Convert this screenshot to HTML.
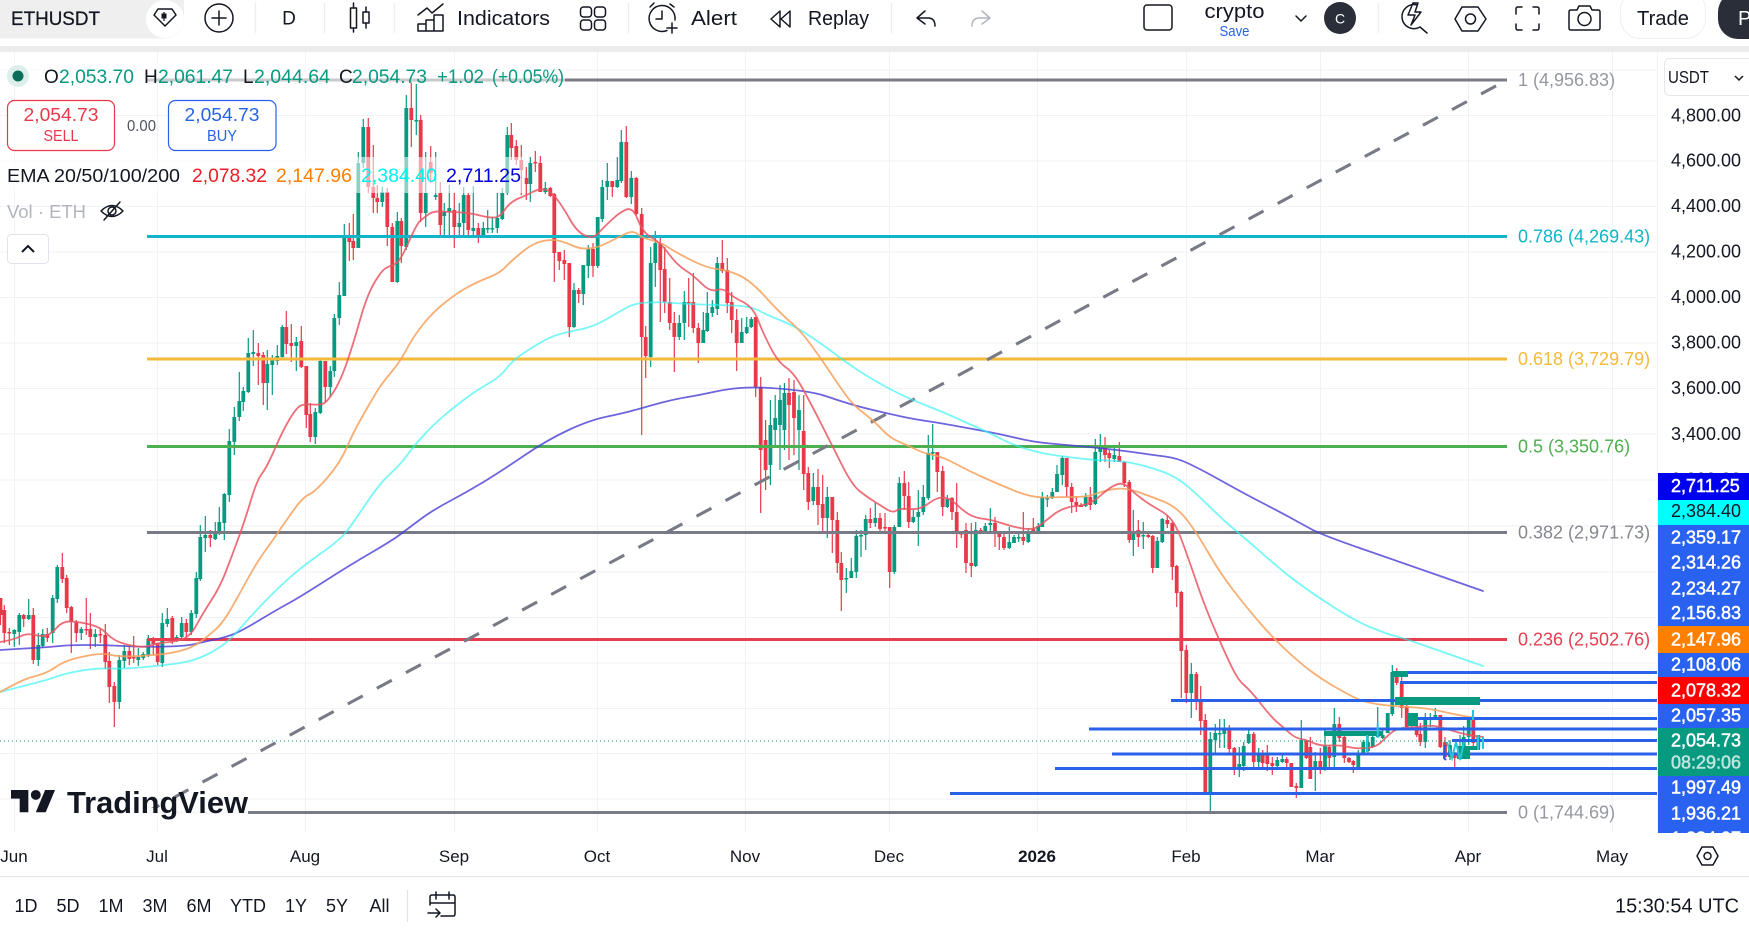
<!DOCTYPE html>
<html lang="en">
<head>
<meta charset="utf-8">
<title>ETHUSDT</title>
<style>
html,body{margin:0;padding:0;background:#fff;width:1749px;height:931px;overflow:hidden}
svg{display:block;font-family:"Liberation Sans",sans-serif;filter:blur(.3px)}
.i{fill:none;stroke:#131722;stroke-width:1.5;stroke-linecap:round;stroke-linejoin:round}
.t{fill:#131722}
.ax{font-size:18px;fill:#131722}
.tg{font-size:18px;fill:#fff;stroke:#fff;stroke-width:.5}
.xl{font-size:17px;fill:#131722;text-anchor:middle}
.rg{font-size:18px;fill:#131722;text-anchor:middle}
.fb{font-size:18px}
</style>
</head>
<body>
<svg xmlns="http://www.w3.org/2000/svg" width="1749" height="931" viewBox="0 0 1749 931">
<rect width="1749" height="931" fill="#fff"/>

<!-- grid -->
<g stroke="#f0f2f6" stroke-width="1">
<path d="M0 70H1657M0 115.5H1657M0 161H1657M0 206.500H1657M0 252H1657M0 297.500H1657M0 343H1657M0 388.500H1657M0 434H1657M0 480H1657M0 526H1657M0 572H1657M0 617.500H1657M0 663H1657M0 708.500H1657M0 753.500H1657M0 799H1657"/>
<path d="M14.500 52V833M157.500 52V833M305.500 52V833M454.500 52V833M597.500 52V833M745.500 52V833M889.500 52V833M1037.500 52V833M1186.500 52V833M1320.500 52V833M1468.500 52V833M1612.500 52V833M1657.500 52V833"/>
</g>

<!-- candles -->
<path id="gw" fill="none" stroke="#089981" stroke-width="1.2"/>
<path id="rw" fill="none" stroke="#e8394a" stroke-width="1.2"/>
<path id="gb" fill="none" stroke="#089981" stroke-width="3.8"/>
<path id="rb" fill="none" stroke="#e8394a" stroke-width="3.8"/>

<!-- fib lines -->
<g fill="none" stroke-width="3.1">
<path d="M147 80H1507" stroke="#787b86"/>
<path d="M147 236.500H1507" stroke="#11b4c9"/>
<path d="M147 359H1507" stroke="#f6b93b"/>
<path d="M147 446.500H1507" stroke="#4caf50"/>
<path d="M147 532.500H1507" stroke="#787b86"/>
<path d="M147 639.500H1507" stroke="#e53e4f"/>
<path d="M147 812.500H1507" stroke="#787b86"/>
<path d="M147 812L1507 80" stroke="#787b86" stroke-dasharray="17 16" stroke-dashoffset="3"/>
</g>
<g class="fb">
<text x="1518" y="86" fill="#9598a1">1 (4,956.83)</text>
<text x="1518" y="242.500" fill="#11b4c9">0.786 (4,269.43)</text>
<text x="1518" y="365" fill="#f6b93b">0.618 (3,729.79)</text>
<text x="1518" y="452.500" fill="#4caf50">0.5 (3,350.76)</text>
<text x="1518" y="538.500" fill="#85888f">0.382 (2,971.73)</text>
<text x="1518" y="645.500" fill="#e53e4f">0.236 (2,502.76)</text>
<text x="1518" y="818.500" fill="#9598a1">0 (1,744.69)</text>
</g>

<!-- EMA lines -->
<g id="ema" fill="none" stroke-width="1.8" stroke-linejoin="round" stroke-linecap="round">
<polyline stroke="#4a3fd6" stroke-opacity=".8" points="0,650 33,648 50,647 70,645 100,645 123,646 147,647 187,646 203,642 227,637 243,630 263,618 280,608 300,597 350,565 393,540 410,527 433,510 467,492 500,472 547,440 590,420 625,413 670,400 700,395 727,389 753,387 787,389 817,393 837,400 860,407 890,414 913,419 940,423 967,428 1000,434 1033,442 1067,445 1100,448 1133,452 1153,455 1177,458 1200,469 1220,480 1247,495 1280,512 1300,523 1322,535 1400,562 1483,591"/>
<polyline stroke="#2ff2f2" stroke-opacity=".65" points="0,692 27,685 47,680 67,673 97,668 123,669 157,666 190,662 213,652 230,640 250,617 273,593 300,568 340,540 353,523 380,483 400,465 413,447 433,425 453,408 477,390 500,377 513,360 533,347 550,337 567,332 593,327 617,313 635,303 660,302 687,304 717,305 750,306 767,315 797,327 830,350 847,363 873,380 907,398 943,412 967,423 990,433 1013,445 1040,453 1067,457 1093,460 1123,461 1150,467 1177,477 1200,497 1223,520 1247,540 1273,563 1300,585 1353,620 1387,634 1403,638 1437,650 1483,666"/>
<polyline stroke="#f7a05a" stroke-opacity=".85" points="0,692 17,683 28,678 47,673 63,662 80,657 103,653 120,657 157,655 177,652 193,647 207,637 223,623 240,593 257,562 273,540 283,525 303,497 315,492 340,463 353,433 370,403 382,383 400,362 413,337 433,312 457,293 477,282 500,273 510,262 533,243 553,239 567,243 580,249 597,248 617,238 633,230 642,238 660,242 677,253 707,268 727,270 750,280 780,313 800,330 820,357 840,387 853,405 873,420 890,438 907,445 923,453 943,457 967,470 1000,485 1033,498 1060,497 1087,497 1100,492 1123,487 1150,496 1177,507 1197,533 1220,573 1247,608 1273,638 1300,663 1320,678 1340,690 1363,702 1390,706 1427,708 1457,715 1483,719"/>
<polyline stroke="#ea5561" stroke-opacity=".85" points="0,642 13,640 27,633 43,637 52,633 63,621 80,622 100,627 110,637 120,643 143,648 157,643 173,642 190,637 203,613 220,587 233,553 245,520 257,480 267,467 283,430 297,407 305,404 320,405 327,402 340,382 353,345 367,295 382,270 390,266 400,262 417,223 425,217 433,211 453,212 470,213 490,218 500,217 510,202 527,195 538,189 550,190 563,207 577,232 593,239 603,228 620,212 633,207 643,233 660,242 677,265 693,275 710,292 723,288 733,297 753,307 763,333 778,362 793,372 807,396 833,447 852,485 867,497 883,507 893,513 900,508 920,510 937,497 950,498 970,517 993,520 1013,527 1033,530 1043,523 1063,507 1090,505 1110,487 1123,482 1133,492 1150,505 1167,514 1177,527 1190,563 1205,607 1225,653 1238,680 1250,690 1272,718 1283,727 1295,738 1307,740 1320,746 1340,745 1357,749 1377,747 1388,735 1398,728 1417,727 1433,725 1450,730 1467,735 1483,737"/>
</g>

<!-- price dotted -->
<path d="M0 741H1657" stroke="#089981" stroke-width="1" stroke-dasharray="1 3"/>

<!-- order lines -->
<g fill="none" stroke="#2962e8" stroke-width="3">
<path d="M1392 672.500H1657M1400 682.500H1657M1171 700.500H1657M1408 718.500H1657M1089 729H1657M1452 740.500H1657M1112 754H1657M1055 768.500H1657M950 793.500H1657"/>
</g>
<!-- position bars -->
<g fill="#089981">
<rect x="1392" y="671" width="16" height="6"/>
<rect x="1395" y="697" width="85" height="8"/>
<rect x="1324" y="731" width="59" height="5"/>
<rect x="1407" y="713" width="11" height="13"/>
<rect x="1457" y="746" width="13" height="13"/>
<rect x="1470" y="746" width="10" height="4"/>
</g>
<g fill="none" stroke="#26c6da" stroke-width="2">
<path d="M1377.700 723V738M1367 735V752M1473 710V720M1478 735V750M1483 737V749M1447 742L1452 758L1456 742L1460 760L1464 742"/>
</g>
<path d="M1445 745L1444 758L1446 760" fill="none" stroke="#3d50e0" stroke-width="2"/>

<!-- TradingView logo -->
<rect x="147" y="808" width="101" height="9" fill="#fff" fill-opacity=".95"/>
<g transform="translate(11 785) scale(1.24)" fill="#131722">
<path d="M14 22H7V11H0V4h14v18zM28 22h-8l7.500-18h8L28 22z"/><circle cx="20" cy="8" r="4"/>
</g>
<text x="67" y="813" font-size="30.500" font-weight="700" class="t" textLength="181" lengthAdjust="spacingAndGlyphs">TradingView</text>

<!-- legend backdrops -->
<rect x="0" y="63" width="565" height="20" fill="#fff" fill-opacity=".6"/>
<rect x="0" y="157" width="525" height="36" fill="#fff" fill-opacity=".55"/>

<!-- legend -->
<circle cx="18" cy="76" r="11" fill="#dcefeb"/><circle cx="18" cy="76" r="5.500" fill="#0b6e5c"/>
<g font-size="19" fill="#089981">
<text x="44" y="83" fill="#131722">O</text><text x="59" y="83" textLength="75" lengthAdjust="spacingAndGlyphs">2,053.70</text>
<text x="144" y="83" fill="#131722">H</text><text x="158" y="83" textLength="75" lengthAdjust="spacingAndGlyphs">2,061.47</text>
<text x="243" y="83" fill="#131722">L</text><text x="254" y="83" textLength="76" lengthAdjust="spacingAndGlyphs">2,044.64</text>
<text x="339" y="83" fill="#131722">C</text><text x="352" y="83" textLength="75" lengthAdjust="spacingAndGlyphs">2,054.73</text>
<text x="437" y="83" textLength="47" lengthAdjust="spacingAndGlyphs">+1.02</text>
<text x="492" y="83" textLength="72" lengthAdjust="spacingAndGlyphs">(+0.05%)</text>
</g>

<!-- sell/buy -->
<rect x="7.500" y="100.500" width="107" height="50" rx="7" fill="#fff" stroke="#e8394a" stroke-width="1.200"/>
<text x="61" y="121" text-anchor="middle" font-size="18" fill="#e8394a" textLength="75" lengthAdjust="spacingAndGlyphs">2,054.73</text>
<text x="61" y="141" text-anchor="middle" font-size="16" fill="#e8394a" textLength="35" lengthAdjust="spacingAndGlyphs">SELL</text>
<text x="127" y="131" font-size="15.500" fill="#50535e" textLength="29" lengthAdjust="spacingAndGlyphs">0.00</text>
<rect x="168.500" y="100.500" width="107.500" height="50" rx="7" fill="#fff" stroke="#2962e8" stroke-width="1.200"/>
<text x="222" y="121" text-anchor="middle" font-size="18" fill="#2962e8" textLength="75" lengthAdjust="spacingAndGlyphs">2,054.73</text>
<text x="222" y="141" text-anchor="middle" font-size="16" fill="#2962e8" textLength="30" lengthAdjust="spacingAndGlyphs">BUY</text>

<!-- EMA row -->
<text x="7" y="182" font-size="18.500" class="t" textLength="173" lengthAdjust="spacingAndGlyphs">EMA 20/50/100/200</text>
<g font-size="19">
<text x="192" y="182" fill="#ee1c25" textLength="75" lengthAdjust="spacingAndGlyphs">2,078.32</text>
<text x="276" y="182" fill="#ff7f00" textLength="76" lengthAdjust="spacingAndGlyphs">2,147.96</text>
<text x="361" y="182" fill="#00f0f0" textLength="76" lengthAdjust="spacingAndGlyphs">2,384.40</text>
<text x="446" y="182" fill="#0000e0" textLength="75" lengthAdjust="spacingAndGlyphs">2,711.25</text>
</g>

<!-- vol -->
<text x="7" y="218" font-size="18" fill="#b2b5be" textLength="79" lengthAdjust="spacingAndGlyphs">Vol · ETH</text>
<g class="i"><path d="M101 211Q112 200 123 211Q112 222 101 211Z"/><circle cx="112" cy="211" r="4"/><path d="M104 220L120 202"/></g>

<!-- collapse -->
<rect x="7.500" y="234.500" width="41" height="29" rx="4" fill="#fff" stroke="#e0e3eb"/>
<path d="M22 252L28 246L34 252" fill="none" stroke="#131722" stroke-width="2"/>

<!-- price axis -->
<rect x="1658" y="96" width="91" height="737" fill="#fff"/>
<g class="ax">
<text x="1671" y="121.500">4,800.00</text>
<text x="1671" y="166.500">4,600.00</text>
<text x="1671" y="212">4,400.00</text>
<text x="1671" y="257.500">4,200.00</text>
<text x="1671" y="303">4,000.00</text>
<text x="1671" y="348.500">3,800.00</text>
<text x="1671" y="394">3,600.00</text>
<text x="1671" y="440">3,400.00</text>
<text x="1671" y="485.500">3,200.00</text>
</g>
<rect x="1664.500" y="58.500" width="90" height="37" rx="5" fill="#fff" stroke="#e6e8ee"/>
<text x="1668" y="83" font-size="17.500" class="t" textLength="41" lengthAdjust="spacingAndGlyphs">USDT</text>
<path d="M1735 76L1739 80L1743 76" fill="none" stroke="#131722" stroke-width="1.500"/>

<!-- tags -->
<rect x="1658" y="473" width="91" height="27" fill="#0000f0"/>
<rect x="1658" y="500" width="91" height="25" fill="#00ffff"/>
<rect x="1658" y="525" width="91" height="101" fill="#2962f0"/>
<rect x="1658" y="626" width="91" height="27" fill="#ff7f00"/>
<rect x="1658" y="653" width="91" height="24" fill="#2962f0"/>
<rect x="1658" y="677" width="91" height="27" fill="#ff0000"/>
<rect x="1658" y="704" width="91" height="24" fill="#2962f0"/>
<rect x="1658" y="728" width="91" height="48" fill="#089981"/>
<rect x="1658" y="776" width="91" height="70" fill="#2962f0"/>
<g class="tg">
<text x="1671" y="492">2,711.25</text>
<text x="1671" y="517" style="fill:#131722;stroke:none">2,384.40</text>
<text x="1671" y="543.500">2,359.17</text>
<text x="1671" y="568.500">2,314.26</text>
<text x="1671" y="594.500">2,234.27</text>
<text x="1671" y="619">2,156.83</text>
<text x="1671" y="645.500">2,147.96</text>
<text x="1671" y="670.500">2,108.06</text>
<text x="1671" y="696.500">2,078.32</text>
<text x="1671" y="721.500">2,057.35</text>
<text x="1671" y="746.500">2,054.73</text>
<text x="1671" y="768.500" style="fill:#bfe6df;stroke:#bfe6df">08:29:06</text>
<text x="1671" y="793.500">1,997.49</text>
<text x="1671" y="819.500">1,936.21</text>
<text x="1671" y="844.500">1,834.97</text>
</g>
<rect x="0" y="833" width="1749" height="15" fill="#fff"/>

<!-- x axis -->
<g class="xl">
<text x="14" y="862">Jun</text><text x="157" y="862">Jul</text><text x="305" y="862">Aug</text><text x="454" y="862">Sep</text>
<text x="597" y="862">Oct</text><text x="745" y="862">Nov</text><text x="889" y="862">Dec</text><text x="1037" y="862" font-weight="700">2026</text>
<text x="1186" y="862">Feb</text><text x="1320" y="862">Mar</text><text x="1468" y="862">Apr</text><text x="1612" y="862">May</text>
</g>
<g class="i" stroke-width="1.400"><path d="M1697 856L1702 847H1713L1718 856L1713 865H1702Z"/><circle cx="1707.500" cy="856" r="3.500"/></g>
<path d="M0 876.500H1749" stroke="#e6e8ec" stroke-width="1.200"/>

<!-- bottom bar -->
<g class="rg">
<text x="26" y="912">1D</text><text x="68" y="912">5D</text><text x="111" y="912">1M</text><text x="155" y="912">3M</text><text x="199" y="912">6M</text>
<text x="248" y="912">YTD</text><text x="296" y="912">1Y</text><text x="337" y="912">5Y</text><text x="379.500" y="912">All</text>
</g>
<path d="M407.500 890V922" stroke="#e0e3eb" stroke-width="1.200"/>
<g class="i" stroke-width="1.400"><path d="M430 905V897Q430 895 432 895H453Q455 895 455 897V914Q455 916 453 916H441M436 892V899M449 892V899M430 903H455M428 913H440M436 909L440 913L436 917"/></g>
<text x="1739" y="912.500" text-anchor="end" font-size="20" class="t" textLength="124" lengthAdjust="spacingAndGlyphs">15:30:54 UTC</text>

<!-- top bar -->
<rect x="0" y="0" width="1749" height="46" fill="#fff"/>
<rect x="0" y="46" width="1749" height="6" fill="#ececec"/>
<rect x="-30" y="-20" width="214" height="58.500" rx="19" fill="#efefef"/>
<circle cx="165" cy="19" r="19" fill="#fff"/>
<text x="11" y="25" font-size="19" class="t" stroke="#131722" stroke-width=".25" textLength="89" lengthAdjust="spacingAndGlyphs">ETHUSDT</text>
<g class="i">
<path d="M158 9H172L176 15L165 26L154 15Z"/>
<circle cx="219" cy="18" r="14"/><path d="M219 11V25M212 18H226"/>
</g>
<path d="M164 12V21" stroke="#131722" stroke-width="1.200"/><rect x="161.500" y="13.500" width="5" height="5" fill="#131722"/>
<g stroke="#eceef2" stroke-width="1.400"><path d="M255.500 3V33M324.500 3V33M394.500 3V33M628.500 3V33M891.500 3V33M1378.500 3V33"/></g>
<text x="289" y="24.500" text-anchor="middle" font-size="19" class="t">D</text>
<g class="i">
<path d="M353.500 3V8M353.500 28V32M366 7V12M366 23V28"/><rect x="350.500" y="8" width="6" height="20"/><rect x="363" y="12" width="6" height="11"/>
<path d="M418 15L427 8L432 13L443 4M418 31V24H426V31M426 31V20H434V31M434 31V15H443V31M418 31H443"/>
<rect x="580.500" y="7" width="11" height="10" rx="3"/><rect x="594.500" y="7" width="11" height="10" rx="3"/><rect x="580.500" y="20" width="11" height="10" rx="3"/><rect x="594.500" y="20" width="11" height="10" rx="3"/>
<path d="M667 30.500A13 13 0 1 1 675 20M662 11V19H656M650 7L654 3M674 7L670 4M672 23V33M667 28H677"/>
<path d="M780 11L771 19L780 27ZM790 11L781 19L790 27Z"/>
<path d="M925 11L917 18L925 24M917 18H928Q935 18 935 26"/>
<path d="M982 11L990 18L982 24M990 18H979Q972 18 972 26" stroke="#b2b5be"/>
<rect x="1144" y="5" width="28" height="25" rx="3"/>
<path d="M1296 16L1301 21L1306 16"/>
<path d="M1417 5A12 12 0 1 0 1420 27M1420 27L1427 33M1413 3L1408 15H1415L1411 25L1421 12H1415L1418 3Z"/>
<path d="M1455 19L1462 7H1478L1486 19L1478 31H1462Z"/><circle cx="1470.500" cy="19" r="5"/>
<path d="M1516 14V9Q1516 7 1518 7H1522M1533 7H1537Q1539 7 1539 9V14M1539 24V28Q1539 30 1537 30H1533M1522 30H1518Q1516 30 1516 28V24"/>
<path d="M1569 12Q1569 10 1571 10H1577L1579 6H1590L1592 10H1598Q1600 10 1600 12V28Q1600 30 1598 30H1571Q1569 30 1569 28Z"/><circle cx="1584.500" cy="19" r="6.500"/>
</g>
<text x="457" y="25" font-size="20" class="t" textLength="93" lengthAdjust="spacingAndGlyphs">Indicators</text>
<text x="691" y="25" font-size="20" class="t" textLength="46" lengthAdjust="spacingAndGlyphs">Alert</text>
<text x="808" y="25" font-size="20" class="t" textLength="61" lengthAdjust="spacingAndGlyphs">Replay</text>
<text x="1234.500" y="18" text-anchor="middle" font-size="20" class="t" textLength="60" lengthAdjust="spacingAndGlyphs">crypto</text>
<text x="1234.500" y="36" text-anchor="middle" font-size="14.500" fill="#2962e8" textLength="30" lengthAdjust="spacingAndGlyphs">Save</text>
<circle cx="1340" cy="18" r="16" fill="#2a2e39"/>
<text x="1340" y="23.500" text-anchor="middle" font-size="14" fill="#fff">C</text>
<rect x="1620.500" y="-10" width="85" height="48.500" rx="20" fill="#fff" stroke="#f0f1f4" stroke-width="1.200"/>
<text x="1663" y="25" text-anchor="middle" font-size="20" class="t" textLength="52" lengthAdjust="spacingAndGlyphs">Trade</text>
<rect x="1718" y="-8" width="70" height="47" rx="20" fill="#2a2e39"/>
<text x="1738" y="25" font-size="20" fill="#fff">P</text>
</svg>
<script>
var c=[-0.5,598,598,615,625,-4.3,605,610,633,643,-9.3,628,632,633,645,14.3,629,630,634,647,19.3,613,615,632,645,-23.7,614,615,619,627,28.7,599,615,619,620,-33.3,608,615,660,664,38.3,633,645,660,666,42.7,629,634,646,648,-47.3,628,634,638,642,52.7,595,598,633,643,57.3,565,567,599,603,-62.3,553,567,579,583,-66.7,575,578,608,613,-71.3,606,607,622,653,-76.3,620,622,633,642,81.3,627,629,633,640,-86.3,598,629,630,635,-90.3,613,629,637,649,95.3,629,634,637,647,-100.3,629,634,635,643,-105.3,624,635,662,669,-109.3,652,661,687,703,-114.3,682,686,702,727,119.3,655,660,702,709,124.3,645,651,661,668,-129.3,646,651,659,665,-133.7,636,657,658,663,138.3,648,657,660,666,143.3,652,654,658,660,148.3,635,639,655,657,-153.3,637,641,644,655,-157.7,643,643,662,665,162.3,613,623,663,667,167.3,608,619,624,627,-172.3,616,618,640,644,176.7,635,637,640,642,181.7,617,623,637,639,-186.3,619,623,632,637,191.3,610,613,632,635,196.3,572,578,614,618,200.3,525,537,579,581,205.3,516,535,538,552,-210.3,530,535,538,547,215.3,522,532,539,540,219.3,507,522,533,535,224.3,493,494,523,540,229.3,429,441,495,502,234.3,407,417,442,455,239.3,372,401,417,421,243.3,387,391,402,411,248.3,338,353,392,393,253.3,330,352,354,366,-258.3,343,353,356,385,-263.3,352,355,383,405,267.3,350,364,383,410,272.3,355,360,365,395,277.3,345,356,361,365,282.3,325,327,357,358,-286.3,311,327,344,354,-291.3,324,343,346,362,296.3,337,342,346,371,-301.3,326,341,367,368,-306.3,366,366,415,428,-310.3,403,414,437,442,315.3,408,412,437,444,320.3,358,361,413,414,-325.3,361,361,387,402,330.3,366,371,387,397,334.3,314,318,371,377,339.3,282,295,318,325,344.3,224,237,296,296,-349.3,223,238,242,261,-353.3,214,241,248,260,358.3,152,163,248,248,363.3,119,127,163,168,-368.3,118,127,187,193,-373.3,145,187,198,213,-377.3,185,198,202,213,382.3,187,192,202,207,-387.3,188,192,227,246,-392.3,223,227,282,282,397.3,212,221,282,283,-401.3,218,221,246,263,406.3,95,108,247,250,-411.3,80,108,120,147,416.3,84,120,121,135,-420.7,115,120,213,222,425.7,152,193,213,227,-430.7,146,162,173,183,435.7,152,195,197,200,-440.3,182,193,225,235,444.3,203,212,216,238,449.3,185,208,212,235,-454.3,193,210,227,248,459.3,203,223,227,238,463.7,187,195,223,237,-468.3,193,195,230,235,473.3,186,228,231,238,-478.3,223,228,235,243,483.3,222,228,235,235,487.7,210,228,229,233,492.3,217,228,229,233,497.3,193,218,228,233,502.3,188,193,219,220,507.3,127,135,193,195,-511.3,123,135,148,160,-516.3,140,146,160,165,-521.3,145,160,170,195,-526.3,167,178,184,200,530.3,157,163,184,202,-535.3,151,162,163,172,-540.3,156,163,192,192,545.3,182,188,192,194,-550.3,187,188,196,197,-554.3,193,194,253,282,-559.3,252,252,261,270,-564.3,250,260,264,280,-569.3,263,263,327,337,574,283,290,327,328,-578.7,288,290,294,303,583.3,265,265,294,305,588.3,245,249,266,278,-593,243,249,266,277,597.7,217,217,266,268,602.3,180,187,219,222,607.3,163,181,187,200,-612.3,181,181,187,197,617.3,157,180,187,188,621.3,130,142,181,183,-626.3,126,142,197,198,631.3,171,178,197,204,-636.3,177,178,214,215,-641.7,208,214,337,435,-645.7,326,337,356,378,650.7,247,263,357,367,655.3,231,243,263,287,-660.3,238,243,270,322,-664.7,247,269,302,313,-669.7,278,302,323,330,-674.3,312,323,337,372,679.3,315,323,337,340,684.3,291,302,323,340,-688.7,278,302,303,327,-693.3,273,302,328,333,-698.3,323,328,343,363,703.3,312,330,343,343,707.3,292,313,331,332,712.3,300,307,313,317,717.3,257,263,309,315,-722.3,240,263,271,273,-727.3,258,270,303,313,-731.7,292,302,320,333,-736.7,309,320,343,371,741.7,318,332,343,343,746.7,317,327,333,334,751.3,317,319,327,328,-755.7,317,317,387,397,-760.7,377,387,450,513,-765.6,420,440,470,490,770.4,400,425,465,485,775.2,395,418,430,445,780,385,400,425,470,784.4,383,393,430,450,-789,378,393,405,460,-794,380,392,418,455,799,395,410,430,470,-803.7,395,431,474,490,-808.3,467,473,502,510,813.3,473,487,501,505,-818,469,487,505,525,-822.7,475,504,518,534,827.3,487,497,518,538,-832.3,497,497,520,553,-837.3,512,520,563,573,-841.3,552,563,580,611,846.3,568,578,579,593,851.3,558,571,578,578,856.3,530,536,572,578,861,530,535,536,557,865.7,515,519,535,550,-870.3,508,519,523,528,875.3,503,518,523,527,-880,513,518,529,533,-885,513,527,528,533,-889.7,527,527,572,588,894.3,525,527,572,574,899.3,477,483,527,527,-904.3,471,483,496,510,-908.7,482,496,522,528,913.3,510,517,522,523,918.3,490,512,517,546,923.3,485,497,512,515,928.3,435,453,498,500,932.7,424,452,453,460,-937.3,452,452,472,492,-942.7,466,471,507,516,947.3,495,499,507,508,-952,497,498,512,520,-956.7,483,512,533,548,-961.3,531,533,534,538,-966,523,530,563,573,-971.3,523,563,566,577,975.7,522,530,566,567,-980.7,528,530,532,533,985.3,523,526,533,533,990.3,508,523,525,533,-995,517,523,534,547,-999.3,532,533,537,550,-1004,531,537,548,550,1009.3,527,542,548,549,1014,535,537,543,543,1018.7,533,537,538,542,-1023.3,512,537,541,545,1028.3,528,532,542,543,-1033.3,518,529,533,534,1038.3,523,526,532,533,1042.3,492,497,527,527,1047.3,495,498,499,507,1052.3,488,492,498,499,1057,465,474,492,492,1062.3,456,458,475,485,-1066.7,458,458,487,497,-1071.7,483,487,502,513,-1076.3,496,502,506,512,-1081,503,505,507,507,1085.7,493,497,506,507,-1090.3,487,497,505,510,1095.3,439,452,504,505,1100.3,434,448,452,462,-1105,437,448,455,462,-1109.3,450,453,458,468,1114.3,447,455,459,462,-1119.3,442,456,462,462,-1124.3,461,462,483,487,-1129.3,480,482,540,543,1133.3,510,531,540,556,-1138.3,520,530,537,547,1143.3,522,535,536,549,-1148.3,532,535,537,538,-1152.7,535,536,568,573,1157.3,537,541,568,568,1162.3,518,519,542,543,-1167.3,515,520,524,528,-1172.3,522,523,567,580,-1176.7,565,566,593,607,-1181.3,591,592,651,698,-1186.3,645,650,693,703,1191.3,663,674,693,718,-1196.3,672,674,700,710,-1200.7,686,700,721,735,-1205.3,714,720,793,793,1210.3,732,739,793,812,1215.3,724,733,740,753,1219.7,719,733,734,748,1224.3,719,729,734,748,-1229.3,725,728,749,755,-1234.3,747,748,767,775,1239.3,747,764,767,777,1243.7,742,746,766,771,1248.7,730,734,743,744,-1253.7,732,734,762,768,1258.7,748,753,762,767,-1262.7,750,753,763,768,-1267.3,745,755,764,771,-1272.3,757,763,766,775,1277.3,757,760,766,770,1282.3,755,759,762,763,-1286.7,757,759,763,767,-1291.3,763,763,787,787,-1296.3,783,786,788,798,1301.3,720,740,788,788,-1306.3,740,741,758,759,-1310.3,737,747,779,779,1315.3,752,761,768,791,-1320.3,748,761,770,774,1325,730,746,768,771,-1329.3,745,747,758,767,1334.3,708,724,757,767,-1339.3,717,724,738,742,-1344.3,733,737,758,763,-1349,757,758,762,763,-1353.3,760,761,765,773,1358.3,750,753,767,768,1363.3,740,742,754,755,1368,734,742,751,753,1372.7,735,737,747,748,1377.7,707,735,737,738,1382.7,728,735,738,739,1387.7,713,713,733,733,1392.3,665,672,714,716,-1396.7,668,673,683,685,-1401.7,673,682,708,718,-1406.7,703,706,727,728,1411.7,715,718,725,727,-1416.7,718,727,735,737,-1420.3,723,734,742,746,1425.3,713,718,742,748,1430.3,713,718,719,727,1435.3,708,715,718,720,-1440.3,715,715,747,748,-1445,737,742,757,760,1450,740,745,757,760,-1454.7,752,753,758,767,1460,735,747,758,758,1463.7,726,737,758,758,1468.7,718,718,737,745,-1473.3,710,720,743,748,1478.3,735,735,748,750];
var gw="",gb="",rw="",rb="";
for(var i=0;i<c.length;i+=5){var x=Math.abs(c[i]),w="M"+x+" "+c[i+1]+"V"+c[i+4],h=Math.max(c[i+3],c[i+2]+1.5),b="M"+x+" "+c[i+2]+"V"+h;if(c[i]<0){rw+=w;rb+=b}else{gw+=w;gb+=b}}
document.getElementById("gw").setAttribute("d",gw);document.getElementById("gb").setAttribute("d",gb);document.getElementById("rw").setAttribute("d",rw);document.getElementById("rb").setAttribute("d",rb);
var pl=document.querySelectorAll("#ema polyline");
for(var k=0;k<pl.length;k++){var e=pl[k],p=e.getAttribute("points").split(" ").map(function(s){return s.split(",").map(Number)}),d="M"+p[0][0]+" "+p[0][1];
for(var j=1;j<p.length-1;j++){d+="Q"+p[j][0]+" "+p[j][1]+" "+(p[j][0]+p[j+1][0])/2+" "+(p[j][1]+p[j+1][1])/2}
d+="L"+p[p.length-1][0]+" "+p[p.length-1][1];
var n=document.createElementNS("http://www.w3.org/2000/svg","path");n.setAttribute("d",d);n.setAttribute("stroke",e.getAttribute("stroke"));n.setAttribute("stroke-opacity",e.getAttribute("stroke-opacity"));e.parentNode.replaceChild(n,e)}
</script>
</body>
</html>
